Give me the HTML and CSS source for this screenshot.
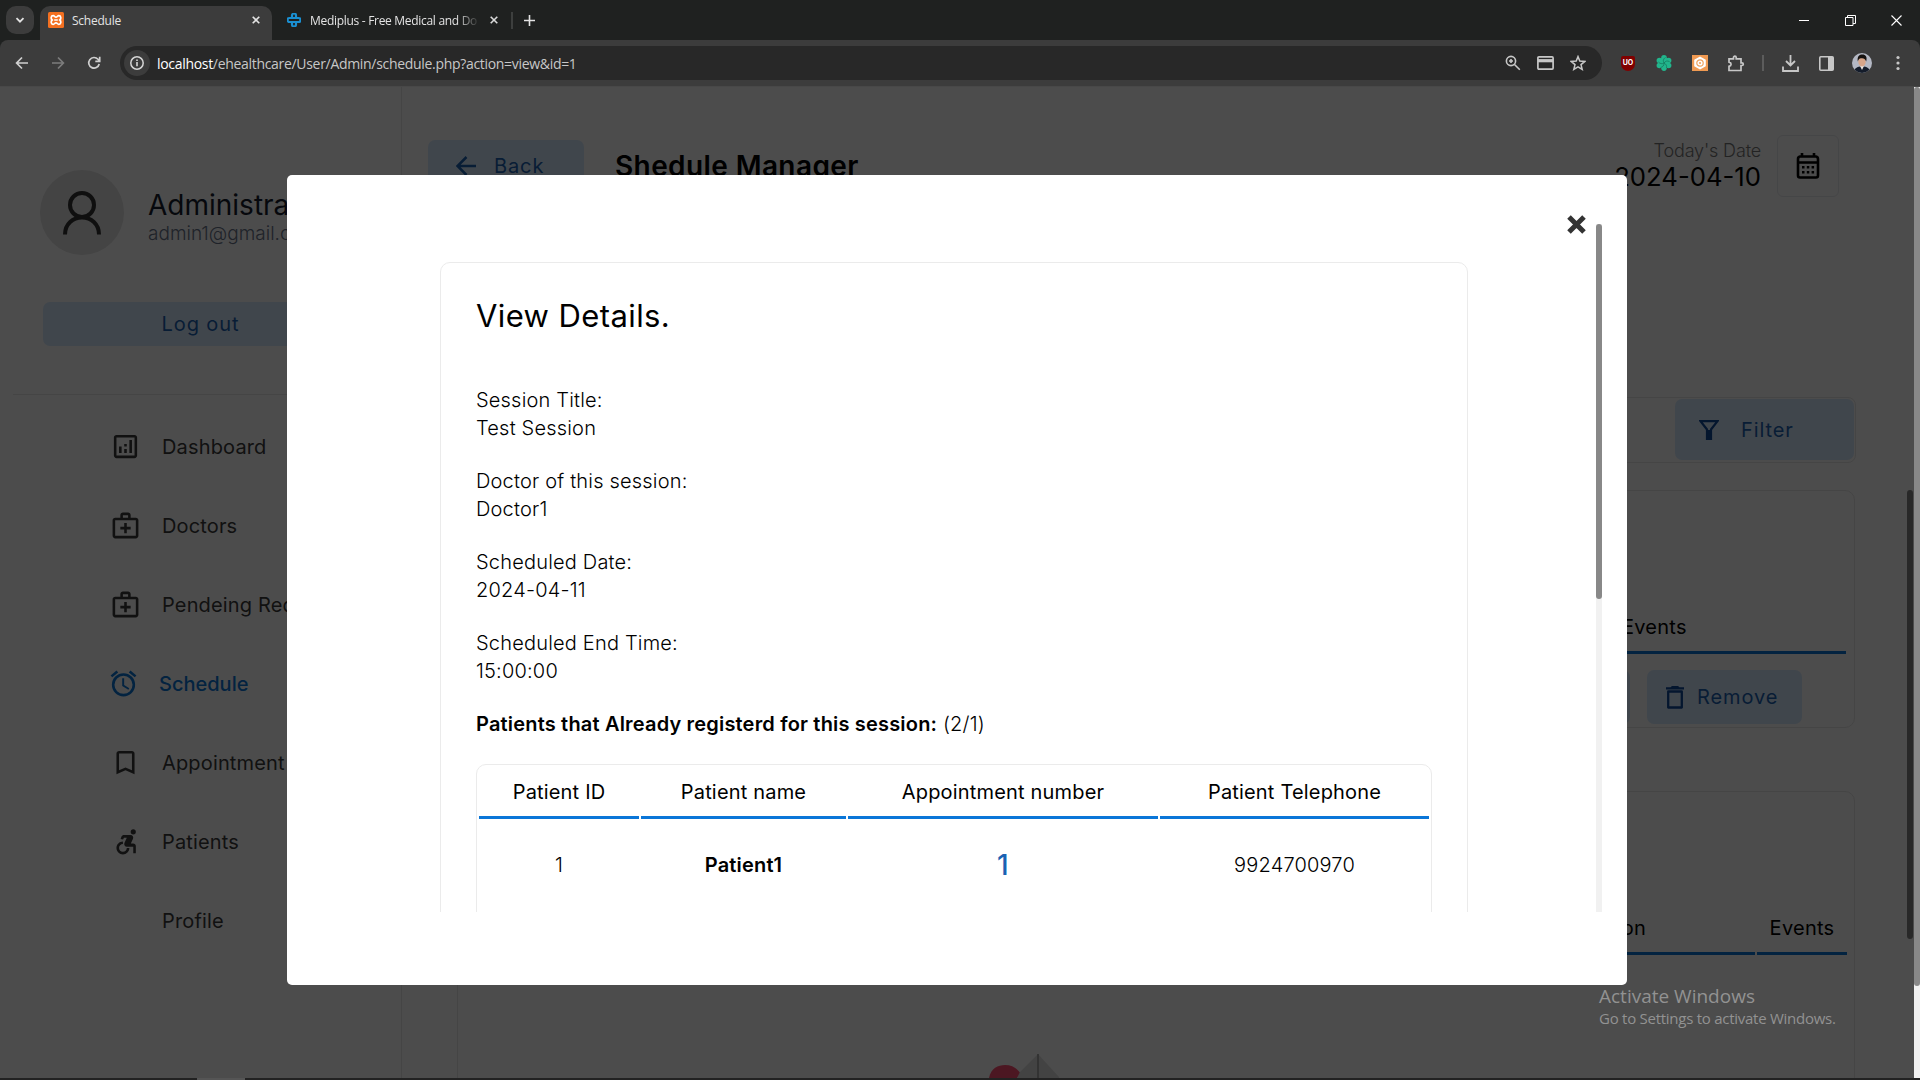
FILE: index.html
```html
<!DOCTYPE html>
<html lang="en">
<head>
<meta charset="utf-8">
<title>Schedule</title>
<link rel="stylesheet" href="styles.css">
</head>
<body>
<div class="browser">
  <header class="tabstrip">
    <div class="tab-search"><svg width="10" height="10" viewBox="0 0 10 10"><path d="M1.5 3.2 5 6.7l3.5-3.5" fill="none" stroke="#e3e3e3" stroke-width="1.8"/></svg></div>
    <div class="tab tab-active">
      <svg class="favicon" width="16" height="16" viewBox="0 0 16 16"><rect width="16" height="16" rx="1.5" fill="#f37021"/><path d="M5.2 3.7c-2.4 0-2.6 3-1 4.3-1.6 1.4-1.3 4.4 1 4.3 1.4 0 1.5-1.5 2.8-1.5s1.4 1.5 2.8 1.5c2.400 0 2.600-3 1-4.300 1.600-1.400 1.300-4.300-1-4.300-1.400 0-1.500 1.500-2.800 1.500S6.600 3.700 5.200 3.700zM6.200 8h3.600" fill="none" stroke="#fff" stroke-width="1.700"/></svg>
      <span class="tab-title">Schedule</span>
      <svg class="tab-close" width="8" height="8" viewBox="0 0 8 8"><path d="m.7.7 6.600 6.600m0-6.600L.7 7.300" stroke="#e3e3e3" stroke-width="1.600"/></svg>
    </div>
    <div class="tab tab-idle">
      <svg class="favicon" width="14" height="14" viewBox="0 0 14 14"><path d="M5 5V2.500a2 2 0 0 1 4 0V5h2.500a2 2 0 0 1 0 4H9v2.500a2 2 0 0 1-4 0V9H2.500a2 2 0 0 1 0-4H9M5 9h6" fill="none" stroke="#1a8fd1" stroke-width="2.200"/></svg>
      <span class="tab-title tab-fade">Mediplus - Free Medical and Do</span>
      <svg class="tab-close" width="8" height="8" viewBox="0 0 8 8"><path d="m.7.7 6.600 6.600m0-6.600L.7 7.300" stroke="#dadada" stroke-width="1.600"/></svg>
    </div>
    <i class="tab-sep"></i>
    <svg class="new-tab" width="11" height="11" viewBox="0 0 11 11"><path d="M5.500 0v11M0 5.500h11" stroke="#e3e3e3" stroke-width="1.600"/></svg>
    <div class="window-buttons">
      <svg width="11" height="11" viewBox="0 0 11 11"><path d="M0 5.500h10" stroke="#fff"/></svg>
      <svg width="11" height="11" viewBox="0 0 11 11"><path d="M.5 2.500h7.500v8H.5zM2.500 2.500V.5h8v8H8" fill="none" stroke="#fff"/></svg>
      <svg width="11" height="11" viewBox="0 0 11 11"><path d="m.5.5 10 10m0-10-10 10" stroke="#fff" stroke-width="1.100"/></svg>
    </div>
  </header>

  <div class="toolbar">
    <div class="nav-buttons">
      <svg width="14" height="14" viewBox="0 0 14 14"><path d="M13 7H2m5-5.500L1.600 7 7 12.500" fill="none" stroke="#d0d0d0" stroke-width="1.700"/></svg>
      <svg width="14" height="14" viewBox="0 0 14 14"><path d="M1 7h11M7 1.500 12.400 7 7 12.500" fill="none" stroke="#7c7c7c" stroke-width="1.700"/></svg>
      <svg width="14" height="14" viewBox="0 0 14 14"><path d="M12.200 8A5.300 5.300 0 1 1 11 3.300L12.500 5M12.700.8V5.300H8.300" fill="none" stroke="#d0d0d0" stroke-width="1.700"/></svg>
    </div>
    <div class="address">
      <div class="site-info"><svg width="16" height="16" viewBox="0 0 16 16"><circle cx="8" cy="8" r="6.200" fill="none" stroke="#d6d6d6" stroke-width="1.500"/><path d="M8 7v4.200M8 4.500v1.600" stroke="#d6d6d6" stroke-width="1.600"/></svg></div>
      <span class="url"><b>localhost</b>/ehealthcare/User/Admin/schedule.php?action=view&amp;id=1</span>
      <div class="address-icons">
        <svg width="16" height="16" viewBox="0 0 16 16"><circle cx="6" cy="6" r="4.600" fill="none" stroke="#c7c7c7" stroke-width="1.600"/><path d="m9.500 9.500 5.300 5.300M4 6h4M6 4v4" stroke="#c7c7c7" stroke-width="1.600"/></svg>
        <svg width="17" height="14" viewBox="0 0 17 14"><rect x=".9" y=".9" width="15.200" height="12.200" rx="1" fill="none" stroke="#c7c7c7" stroke-width="1.700"/><path d="M1 4.700h15" stroke="#c7c7c7" stroke-width="3.200"/></svg>
        <svg width="16" height="16" viewBox="0 0 16 16"><path d="m8 1.600 1.800 4.500 4.900.4-3.700 3.100 1.200 4.800L8 11.800l-4.200 2.600L5 9.600 1.300 6.500l4.900-.4z" fill="none" stroke="#c7c7c7" stroke-width="1.500"/></svg>
      </div>
    </div>
    <div class="extensions">
      <div class="ublock">uo</div>
      <svg width="16" height="16" viewBox="0 0 16 16"><g fill="#22b58c"><circle cx="8" cy="8" r="5.500"/><circle cx="8" cy="2.900" r="2.800"/><circle cx="12.600" cy="5.500" r="2.800"/><circle cx="12.600" cy="10.500" r="2.800"/><circle cx="8" cy="13.100" r="2.800"/><circle cx="3.400" cy="10.500" r="2.800"/><circle cx="3.400" cy="5.500" r="2.800"/></g><path d="M8 8c-1-2-1-4 1.500-5.500M8 8c1.500-2 3-2.500 5.500-1.500M8 8c2 1 3 2.500 2.500 5M8 8c0 2.500-1 4-3.500 4.500M8 8c-2 1.200-4 .8-5.500-1" fill="none" stroke="#157a5f" stroke-width=".8"/></svg>
      <svg width="16" height="16" viewBox="0 0 16 16"><rect width="16" height="16" fill="#f09a52"/><path d="m8 1.500 5.800 3.200v6.600L8 14.500l-5.800-3.200V4.700z" fill="#fff"/><circle cx="8" cy="8" r="3.200" fill="none" stroke="#f0a35f" stroke-width="1.200"/><circle cx="8" cy="8" r="1.100" fill="#f0a35f"/></svg>
      <svg width="18" height="17" viewBox="0 0 18 17"><path d="M2 3.800h4.500V2.500a1.300 1.300 0 0 1 2.700 0v1.300H14v4.100h1a1.300 1.300 0 0 1 0 2.600h-1v5H2v-4.200c2.800-.6 2.800-3.600 0-4.200z" fill="none" stroke="#c7c7c7" stroke-width="1.700"/></svg>
      <i class="toolbar-sep"></i>
      <svg width="17" height="17" viewBox="0 0 17 17"><path d="M8.500 0v10M4 6l4.500 4.500L13 6M1 11.500V16h15v-4.500" fill="none" stroke="#c7c7c7" stroke-width="1.800"/></svg>
      <svg width="15" height="15" viewBox="0 0 15 15"><rect x=".8" y=".8" width="13.400" height="13.400" rx="1" fill="none" stroke="#c7c7c7" stroke-width="1.600"/><path d="M9 1h5v13H9z" fill="#c7c7c7"/></svg>
      <svg width="20" height="20" viewBox="0 0 20 20"><clipPath id="face"><circle cx="10" cy="10" r="10"/></clipPath><g clip-path="url(#face)"><rect width="20" height="20" fill="#b4b8c4"/><path d="M2 20c0-5 3-6 8-7 5 1 8 2 8 7z" fill="#141c2a"/><path d="m8 13 2 4 2-4z" fill="#e9e4e2"/><ellipse cx="10" cy="8.500" rx="3.700" ry="5" fill="#d8a68a"/><path d="M5.800 8.500C5 3 7.500 1.500 10.500 1.500s5 2 3.700 7C13 5.500 12 5 9 5.200 7 5.500 6.500 6.500 5.800 8.500z" fill="#15110f"/></g></svg>
      <svg width="4" height="16" viewBox="0 0 4 16" fill="#c7c7c7"><circle cx="2" cy="2.500" r="1.600"/><circle cx="2" cy="8" r="1.600"/><circle cx="2" cy="13.500" r="1.600"/></svg>
    </div>
  </div>

  <div class="viewport">
    <div class="page">
      <aside class="sidebar">
        <div class="profile">
          <div class="avatar"><svg width="38" height="44" viewBox="0 0 38 44" fill="none" stroke="#343434" stroke-width="4"><circle cx="19" cy="14" r="12"/><path d="M2 43.500C2 33 10 26.500 19 26.500S36 33 36 43.500"/></svg></div>
          <div class="who"><p class="who-name">Administrator</p><p class="who-mail">admin1@gmail.com</p></div>
        </div>
        <button class="soft-btn logout">Log out</button>
        <nav class="menu">
          <a class="menu-item"><svg class="menu-icon" viewBox="0 0 24 24"><path d="M19 3H5c-1.100 0-2 .9-2 2v14c0 1.100.9 2 2 2h14c1.100 0 2-.9 2-2V5c0-1.100-.9-2-2-2zm0 16H5V5h14zM7 12h2v5H7zm8-5h2v10h-2zm-4 7h2v3h-2zm0-4h2v2h-2z"/></svg>Dashboard</a>
          <a class="menu-item"><svg class="menu-icon" viewBox="0 0 24 24"><path d="M20 6h-4V4c0-1.100-.9-2-2-2h-4c-1.100 0-2 .9-2 2v2H4c-1.100 0-2 .9-2 2v12c0 1.100.9 2 2 2h16c1.100 0 2-.9 2-2V8c0-1.100-.9-2-2-2zM10 4h4v2h-4zm10 16H4V8h16zm-7-10h-2v3H8v2h3v3h2v-3h3v-2h-3z"/></svg>Doctors</a>
          <a class="menu-item"><svg class="menu-icon" viewBox="0 0 24 24"><path d="M20 6h-4V4c0-1.100-.9-2-2-2h-4c-1.100 0-2 .9-2 2v2H4c-1.100 0-2 .9-2 2v12c0 1.100.9 2 2 2h16c1.100 0 2-.9 2-2V8c0-1.100-.9-2-2-2zM10 4h4v2h-4zm10 16H4V8h16zm-7-10h-2v3H8v2h3v3h2v-3h3v-2h-3z"/></svg>Pendeing Request</a>
          <a class="menu-item menu-current"><svg class="menu-icon" viewBox="0 0 24 24"><path d="m22 5.720-4.600-3.860-1.290 1.530 4.600 3.860zM7.880 3.390 6.600 1.860 2 5.710l1.290 1.530zM12.500 8H11v6l4.750 2.850.75-1.230-4-2.370zM12 4a9 9 0 1 0 0 18 9 9 0 0 0 0-18zm0 16a7 7 0 1 1 0-14 7 7 0 0 1 0 14z"/></svg>Schedule</a>
          <a class="menu-item"><svg class="menu-icon" viewBox="0 0 24 24"><path d="M17 3H7c-1.100 0-2 .9-2 2v16l7-3 7 3V5c0-1.100-.9-2-2-2zm0 15-5-2.180L7 18V5h10z"/></svg>Appointment</a>
          <a class="menu-item"><svg class="menu-icon" viewBox="0 0 24 24"><circle cx="18" cy="4.540" r="2"/><path d="M15 17h-2c0 1.650-1.350 3-3 3s-3-1.350-3-3 1.350-3 3-3v-2c-2.760 0-5 2.240-5 5s2.240 5 5 5 5-2.240 5-5zm3-3.500h-1.860l1.670-3.670C18.420 8.500 17.440 7 15.960 7h-5.200c-.81 0-1.540.47-1.870 1.200L8.220 10l1.920.53.65-1.530H13l-1.830 4.100c-.6 1.330.39 2.900 1.850 2.900H18v5h2v-5.500c0-1.100-.9-2-2-2z"/></svg>Patients</a>
          <a class="menu-item"><i class="menu-icon"></i>Profile</a>
        </nav>
      </aside>

      <main class="main">
        <div class="topline">
          <button class="soft-btn back"><svg width="20" height="20" viewBox="0 0 20 20"><path d="M20 10H2m8.500-9L1.500 10l9 9" fill="none" stroke="#1b62b3" stroke-width="2.500"/></svg>Back</button>
          <h1 class="heading">Shedule Manager</h1>
          <div class="today"><p class="today-label">Today's Date</p><p class="today-date">2024-04-10</p></div>
          <div class="calendar"><svg width="24" height="26" viewBox="0 0 24 26"><path d="M4 3.500h16A2.500 2.500 0 0 1 22 6v16.500a2 2 0 0 1-2 2H4a2 2 0 0 1-2-2V6a2.500 2.500 0 0 1 2-2.500zM2 9.500h20M6 0v4m12-4v4" fill="none" stroke="#000" stroke-width="2.600"/><path d="M6 13h2.500v2.500H6zm4.800 0h2.500v2.500h-2.500zm4.800 0h2.500v2.500h-2.500zM6 18h2.500v2.500H6zm4.800 0h2.500v2.500h-2.500zm4.800 0h2.500v2.500h-2.500z"/></svg></div>
        </div>
        <div class="filters">
          <button class="soft-btn filter"><svg width="20" height="20" viewBox="0 0 20 20"><path d="M1.500 1.200h17L12 9.500V19H8V9.500z" fill="none" stroke="#0f4a9c" stroke-width="2.200"/><path d="M8 10h4v9H8z" fill="#0f4a9c"/></svg>Filter</button>
        </div>
        <div class="cards">
          <section class="card sessions">
            <div class="card-head"><span class="col col-wide">Events</span></div>
            <div class="card-actions">
              <button class="soft-btn view">View</button>
              <button class="soft-btn remove"><svg width="18" height="23" viewBox="0 0 18 23"><path d="M2.200 5.500h13.600v16H2.200z" fill="none" stroke="#0f4a9c" stroke-width="2.300" stroke-linejoin="round"/><path d="M0 1.200h4.500L6 0h6l1.500 1.200H18v2.400H0z" fill="#0f4a9c"/></svg>Remove</button>
            </div>
          </section>
          <section class="card bookings">
            <div class="card-head card-head-two"><span class="col col-section">Session</span><span class="col col-events">Events</span></div>
            <svg class="empty-art" width="70" height="24" viewBox="0 0 70 24"><path d="M0 24C2 14 9 11 16 11c7 0 12 3 16 9l-4 4z" fill="#ff4f74"/><path d="M49 0 31 18l-3 6h43z" fill="#e2e2e2"/><path d="M49 0v24" stroke="#999" stroke-width="1.500"/></svg>
          </section>
        </div>
        <i class="inner-scroll"></i>
      </main>
    </div>

    <div class="shade">
      <div class="popup">
        <div class="popup-scroll">
          <section class="details">
            <h2 class="details-title">View Details.</h2>
            <dl class="facts">
              <dt>Session Title:</dt><dd>Test Session</dd>
              <dt>Doctor of this session:</dt><dd>Doctor1</dd>
              <dt>Scheduled Date:</dt><dd>2024-04-11</dd>
              <dt>Scheduled End Time:</dt><dd>15:00:00</dd>
            </dl>
            <p class="registered"><b>Patients that Already registerd for this session:</b> (2/1)</p>
            <div class="patients">
              <div class="th">Patient ID</div><div class="th">Patient name</div><div class="th">Appointment number</div><div class="th">Patient Telephone</div>
              <div class="td">1</div><div class="td td-name">Patient1</div><div class="td td-number">1</div><div class="td">9924700970</div>
            </div>
          </section>
        </div>
        <div class="popup-side">
          <svg class="popup-close" width="19" height="19" viewBox="0 0 19 19"><path d="m2 2 15 15m0-15L2 17" stroke="#333" stroke-width="5"/></svg>
          <div class="popup-track"><i class="popup-thumb"></i></div>
        </div>
      </div>
    </div>

    <div class="page-track"><i class="page-thumb"></i></div>
    <div class="activation"><p class="act-title">Activate Windows</p><p class="act-text">Go to Settings to activate Windows.</p></div>
  </div>
  <footer class="taskbar"><i class="task-active"></i></footer>
</div>
</body>
</html>
```
FILE: styles.css
```css
* { box-sizing: border-box; }
body { margin: 0; font-family: Inter, "Liberation Sans", sans-serif; color: #000; }
p, h1, h2, dl, dd { margin: 0; }
svg { display: block; flex: none; }
button { border: 0; font: inherit; }

.browser { width: 1920px; height: 1080px; display: flex; flex-direction: column; overflow: hidden; background: #1f2120; }

/* Browser chrome */
.tabstrip { height: 40px; flex: none; display: flex; align-items: flex-start; padding: 6px 18px 0 6px; background: #1f2120; font-family: "Open Sans", "Noto Sans", sans-serif; font-size: 12px; color: #e3e3e3; }
.tab-search { width: 28px; height: 28px; border-radius: 10px; background: #3c3c3c; display: flex; align-items: center; justify-content: center; }
.tab { height: 28px; display: flex; align-items: center; }
.tab-active { width: 232px; height: 34px; margin-left: 6px; padding: 0 12px 6px 8px; border-radius: 10px 10px 0 0; background: #3c3c3c; }
.tab-idle { width: 225px; padding: 0 0 0 15px; }
.tab-title { flex: 1; white-space: nowrap; overflow: hidden; margin-left: 8px; letter-spacing: -0.25px; }
.tab-fade { flex: none; width: 170px; margin: 0 10px 0 9px; letter-spacing: -0.3px; -webkit-mask-image: linear-gradient(90deg, #000 86%, transparent); mask-image: linear-gradient(90deg, #000 86%, transparent); }
.tab-sep { width: 2px; height: 17px; margin: 6px 0 0 14px; background: #3d3f3e; }
.new-tab { margin: 9px 0 0 11px; }
.window-buttons { margin: 9px 0 0 auto; display: flex; gap: 35px; }

.toolbar { height: 47px; flex: none; display: flex; align-items: flex-start; padding: 6px 4px 0 15px; border-radius: 8px 8px 0 0; background: #3c3c3c; border-bottom: 1px solid #484848; }
.nav-buttons { display: flex; gap: 22px; margin: 10px 19px 0 0; }
.address { width: 1482px; height: 34px; border-radius: 17px; background: #282828; display: flex; align-items: center; padding: 0 16px 0 4px; }
.site-info { width: 26px; height: 26px; border-radius: 13px; background: #3c3c3c; display: flex; align-items: center; justify-content: center; }
.url { margin-left: 7px; font: 14px "Open Sans", "Noto Sans", sans-serif; letter-spacing: -0.31px; color: #c7c7c7; }
.url b { font-weight: 400; color: #fff; }
.address-icons { margin-left: auto; display: flex; align-items: center; gap: 16px; }
.extensions { height: 34px; margin-left: 8px; display: grid; grid-template-columns: repeat(4, 36px) 18px repeat(4, 36px); align-items: center; justify-items: center; }
.ublock { width: 14px; height: 15px; border-radius: 2px 2px 7px 7px; background: #800000; color: #fff; font-size: 7px; font-weight: 700; line-height: 14px; text-align: center; text-transform: uppercase; }
.toolbar-sep { width: 2px; height: 16px; background: #5c5c5c; }

/* Page */
.viewport { position: relative; height: 991px; flex: none; display: flex; background: #fff; }
.page { flex: 1; display: flex; overflow: hidden; }
.sidebar { width: 402px; flex: none; border-right: 1px solid #e6e6e6; }
.profile { display: flex; align-items: center; padding: 83px 0 0 40px; }
.avatar { width: 84px; height: 85px; border-radius: 50%; background: #e3e3e3; display: flex; align-items: center; justify-content: center; }
.who { margin-left: 24px; padding-top: 8px; }
.who-name { font-size: 28px; line-height: 34px; font-weight: 400; color: #161c2d; }
.who-mail { font-size: 19px; line-height: 24px; font-weight: 300; color: #69748a; }
.soft-btn { display: flex; align-items: center; border-radius: 7px; background: #d8ebff; color: #1b62b3; font-size: 20px; letter-spacing: 0.9px; padding: 0; }
.logout { width: 315px; height: 44px; margin: 47px 0 0 43px; justify-content: center; }
.menu { margin: 48px 12px 0 13px; padding-top: 12px; border-top: 1px solid #e6e6e6; display: flex; flex-direction: column; }
.menu-item { height: 79px; padding-left: 97px; display: flex; align-items: center; gap: 21px; font-size: 20px; white-space: nowrap; color: #3b3b3b; letter-spacing: 0.15px; }
.menu-icon { width: 31px; height: 31px; fill: #3b3b3b; }
.menu-current { padding-left: 95px; gap: 20px; font-weight: 500; letter-spacing: 0; color: #0a76d8; }
.menu-current .menu-icon { fill: #0a76d8; }

.main { position: relative; flex: 1; padding-left: 26px; }
.topline { display: flex; padding-top: 48px; height: 310px; }
.back { width: 156px; height: 52px; margin-top: 5px; padding-left: 28px; gap: 18px; }
.heading { margin: 5px 0 0 31px; font-size: 28px; line-height: 52px; font-weight: 600; letter-spacing: 0.4px; }
.today { margin: 4px 16px 0 auto; text-align: right; }
.today-label { font-size: 18px; line-height: 24px; font-weight: 300; color: #777; letter-spacing: -0.15px; }
.today-date { font-size: 25.7px; line-height: 27px; }
.calendar { width: 62px; height: 62px; margin-right: 75px; border: 1px solid #e8e9ee; border-radius: 6px; display: flex; align-items: center; justify-content: center; }
.filters { height: 66px; margin: 0 58px 0 29px; padding: 0 1px 1px; border: 1px solid #e6e6e6; border-radius: 8px; display: flex; align-items: center; justify-content: flex-end; }
.filter { width: 179px; height: 61px; padding-left: 24px; gap: 22px; }
.cards { margin: 27px 59px 0 29px; }
.card { border: 1px solid #e6e6e6; border-radius: 10px; }
.sessions { height: 238px; padding: 113px 8px 0 7px; }
.card-head { display: flex; gap: 2px; }
.col { height: 50px; padding-top: 11px; line-height: 24px; font-size: 20px; letter-spacing: 0.25px; border-bottom: 3px solid #0a76d8; }
.col-wide { width: 100%; padding-left: 1157px; }
.card-actions { display: flex; justify-content: flex-end; gap: 17px; padding: 16px 44px 0 0; }
.view, .remove { height: 54px; }
.view { width: 155px; justify-content: center; }
.remove { width: 155px; padding-left: 19px; gap: 13px; }
.bookings { height: 400px; margin-top: 63px; padding: 113px 7px 0 6px; }
.col-section { flex: 1; padding-right: 109px; text-align: right; }
.col-events { width: 90px; text-align: center; }
.empty-art { margin: 99px 0 0 525px; }
.inner-scroll { position: absolute; left: 1505px; top: 403px; width: 6px; height: 449px; border-radius: 3px; background: #888; }

/* Popup */
.shade { position: absolute; inset: 0 6px 0 0; background: rgba(0, 0, 0, 0.7); padding: 88px 0 0 287px; }
.popup { width: 1340px; height: 810px; border-radius: 5px; background: #fff; display: flex; padding: 40px 25px 73px 153px; }
.popup-scroll { width: 1028px; padding-top: 47px; overflow: hidden; }
.details { height: 900px; padding: 34px 36px 0 35px; border: 1px solid #ebebeb; border-radius: 10px; }
.details-title { font-size: 31px; line-height: 38px; font-weight: 400; letter-spacing: 0.4px; }
.facts { margin-top: 51px; font-size: 20px; line-height: 28px; font-weight: 300; letter-spacing: 0.19px; }
.facts dd { margin-bottom: 25px; }
.registered { font-size: 20px; line-height: 28px; font-weight: 300; letter-spacing: 0.18px; }
.registered b { font-weight: 600; }
.patients { height: 400px; margin: 26px -1px 0 0; padding: 2px; border: 1px solid #ebebeb; border-radius: 10px; display: grid; grid-template-columns: 160px 205px 310px 269px; grid-template-rows: 52px 87px; gap: 2px; align-content: start; text-align: center; }
.th { padding-top: 13px; font-size: 20px; line-height: 24px; letter-spacing: 0.18px; border-bottom: 3px solid #0a76d8; }
.td { display: flex; align-items: center; justify-content: center; font-size: 20px; font-weight: 300; letter-spacing: 0.18px; }
.td-name { font-weight: 600; }
.td-number { font-size: 28px; font-weight: 500; color: #1b62b3; }
.popup-side { flex: 1; display: flex; justify-content: flex-end; gap: 10px; }
.popup-track { width: 6px; margin-top: 9px; background: #f1f1f1; }
.popup-thumb { display: block; height: 375px; border-radius: 3px; background: #888; }

.page-track { width: 6px; background: #f1f1f1; }
.page-thumb { display: block; height: 899px; border-radius: 3px; background: #888; }
.activation { position: absolute; left: 1599px; top: 896px; font-family: "Open Sans", "Noto Sans", sans-serif; color: #929292; white-space: nowrap; }
.act-title { font-size: 19px; line-height: 26px; }
.act-text { font-size: 15px; line-height: 19px; letter-spacing: -0.26px; }
.taskbar { height: 2px; flex: none; padding-left: 197px; background: #222; }
.task-active { display: block; width: 48px; height: 2px; background: #555; }
```
